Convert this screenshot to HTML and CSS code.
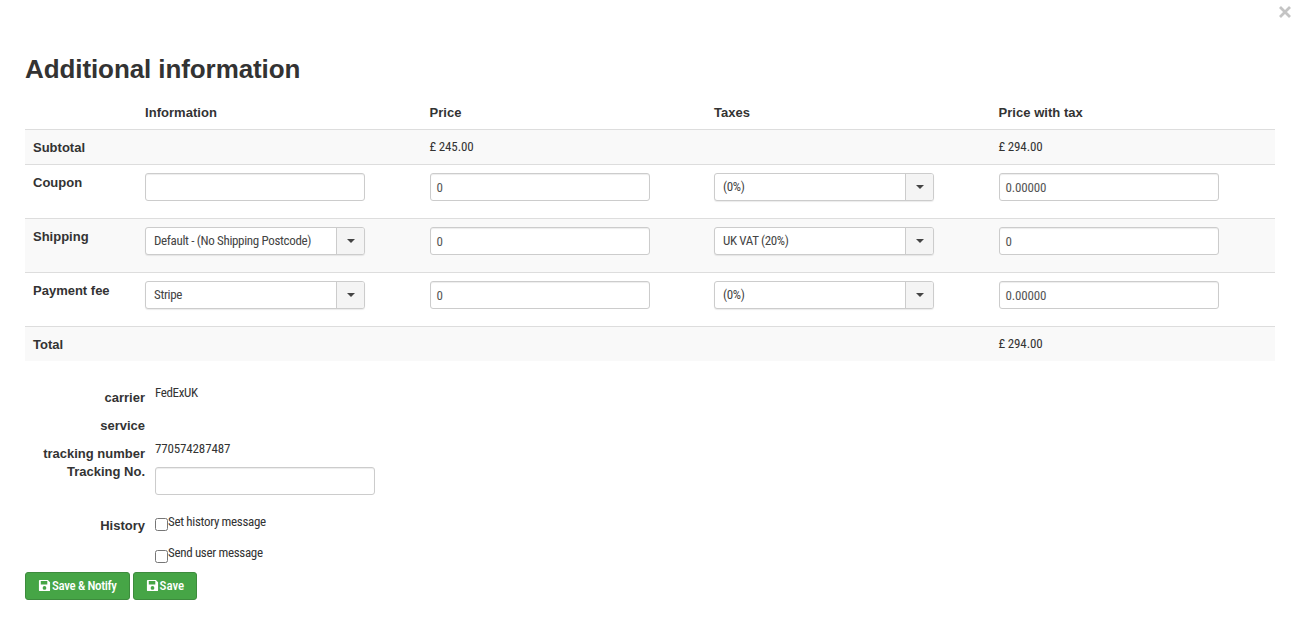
FILE: index.html
```html
<!DOCTYPE html>
<html lang="en">
<head>
<meta charset="utf-8">
<title>Additional information</title>
<link rel="stylesheet" href="styles.css">
</head>
<body>
<button class="close" type="button" aria-label="Close"><svg viewBox="0 0 12 12" width="12" height="12"><path d="M1 1l10 10M11 1L1 11" stroke="#c4c4c4" stroke-width="2.8" fill="none"/></svg></button>
<main class="page">
  <h1 class="title">Additional information</h1>
  <table class="info">
    <colgroup><col class="c-label"><col class="c-col"><col class="c-col"><col class="c-col"><col class="c-col"></colgroup>
    <thead>
      <tr><th></th><th>Information</th><th>Price</th><th>Taxes</th><th>Price with tax</th></tr>
    </thead>
    <tbody>
      <tr class="odd first"><th>Subtotal</th><td></td><td>£ 245.00</td><td></td><td>£ 294.00</td></tr>
      <tr class="tall">
        <th>Coupon</th>
        <td><div class="field"></div></td>
        <td><div class="field">0</div></td>
        <td><div class="select"><span class="sel-text">(0%)</span><span class="sel-btn"><i class="caret"></i></span></div></td>
        <td><div class="field">0.00000</div></td>
      </tr>
      <tr class="odd tall">
        <th>Shipping</th>
        <td><div class="select"><span class="sel-text">Default - (No Shipping Postcode)</span><span class="sel-btn"><i class="caret"></i></span></div></td>
        <td><div class="field">0</div></td>
        <td><div class="select"><span class="sel-text">UK VAT (20%)</span><span class="sel-btn"><i class="caret"></i></span></div></td>
        <td><div class="field">0</div></td>
      </tr>
      <tr class="tall">
        <th>Payment fee</th>
        <td><div class="select"><span class="sel-text">Stripe</span><span class="sel-btn"><i class="caret"></i></span></div></td>
        <td><div class="field">0</div></td>
        <td><div class="select"><span class="sel-text">(0%)</span><span class="sel-btn"><i class="caret"></i></span></div></td>
        <td><div class="field">0.00000</div></td>
      </tr>
      <tr class="odd last"><th>Total</th><td></td><td></td><td></td><td>£ 294.00</td></tr>
    </tbody>
  </table>
  <section class="details">
    <div class="row r-carrier"><span class="lbl">carrier</span><span class="val">FedExUK</span></div>
    <div class="row r-service"><span class="lbl">service</span><span class="val"></span></div>
    <div class="row r-number"><span class="lbl">tracking number</span><span class="val">770574287487</span></div>
    <div class="row r-track"><span class="lbl">Tracking No.</span><div class="field"></div></div>
    <div class="row r-history"><span class="lbl">History</span><label class="check"><span class="box"></span>Set history message</label></div>
    <div class="row r-send"><span class="lbl"></span><label class="check"><span class="box"></span>Send user message</label></div>
  </section>
  <div class="actions">
    <button class="btn btn-notify" type="button"><svg class="ico" viewBox="0 0 14 14"><path fill-rule="evenodd" d="M2 1h8.600L13 3.400V12a1 1 0 0 1-1 1H2a1 1 0 0 1-1-1V2a1 1 0 0 1 1-1zm1 1.200v3.600h7V2.200zM7 7.600a2 2 0 1 0 0 4 2 2 0 0 0 0-4z" fill="#fff"/></svg>Save &amp; Notify</button>
    <button class="btn btn-save" type="button"><svg class="ico" viewBox="0 0 14 14"><path fill-rule="evenodd" d="M2 1h8.600L13 3.400V12a1 1 0 0 1-1 1H2a1 1 0 0 1-1-1V2a1 1 0 0 1 1-1zm1 1.200v3.600h7V2.200zM7 7.600a2 2 0 1 0 0 4 2 2 0 0 0 0-4z" fill="#fff"/></svg>Save</button>
  </div>
</main>
</body>
</html>
```
FILE: styles.css
```css
* { box-sizing: border-box; }
html, body { margin: 0; height: 100%; }
body {
  background: #fff;
  color: #333;
  font-family: "Liberation Sans", Arial, sans-serif;
  font-size: 13px;
  overflow: hidden;
  position: relative;
}
.close {
  position: absolute;
  top: 6px;
  right: 5px;
  width: 12px;
  height: 12px;
  padding: 0;
  border: 0;
  background: none;
  line-height: 0;
}
.page { padding: 0 21px 0 25px; }
.title {
  margin: 0;
  padding-top: 53px;
  height: 95px;
  font-size: 26px;
  line-height: 32px;
  font-weight: 700;
  letter-spacing: -0.09px;
  color: #333;
}
.info {
  width: 1250px;
  table-layout: fixed;
  border-collapse: collapse;
}
.c-label { width: 112px; }
.c-col { width: 284.5px; }
.info thead th {
  height: 33px;
  padding: 8px 8px 7px;
  font-size: 13px;
  line-height: 19px;
  letter-spacing: 0.04px;
  text-align: left;
  vertical-align: bottom;
  border-bottom: 1px solid #ddd;
  color: #333;
}
.info tbody th {
  padding: 8px;
  text-align: left;
  vertical-align: top;
  font-size: 13px;
  line-height: 19px;
  color: #333;
}
.info td {
  padding: 8px;
  vertical-align: top;
  font-family: Roboto, "Liberation Sans", sans-serif;
  font-stretch: 75%;
  font-size: 13px;
  line-height: 18px;
  letter-spacing: -0.15px;
  color: #333;
}
.info tbody tr { border-top: 1px solid #ddd; }
.info tbody tr:first-child { border-top: 0; }
.odd { background: #f9f9f9; }
.first { height: 35px; }
.last { height: 34px; }
.tall { height: 54px; }
.info .first td { padding-bottom: 7px; }
.info .first th { padding-bottom: 7px; }
.info .last td { padding-bottom: 6px; }
.info .last th { padding-bottom: 6px; }
.field {
  width: 220px;
  height: 28px;
  padding: 5px 6px 3px;
  background: #fff;
  border: 1px solid #ccc;
  border-radius: 3px;
  box-shadow: inset 0 1px 1px rgba(0,0,0,.075);
  font-family: Roboto, "Liberation Sans", sans-serif;
  font-stretch: 75%;
  font-size: 13px;
  line-height: 18px;
  letter-spacing: -0.15px;
  color: #555;
}
.select {
  display: flex;
  width: 220px;
  height: 28px;
  background: #fff;
  border: 1px solid #ccc;
  border-radius: 3px;
  box-shadow: 0 1px 1px rgba(0,0,0,.08);
}
.sel-text {
  flex: 1;
  min-width: 0;
  padding: 4px 8px;
  line-height: 18px;
  letter-spacing: -0.34px;
  color: #444;
  white-space: nowrap;
}
.sel-btn {
  flex: none;
  width: 28px;
  display: flex;
  align-items: center;
  justify-content: center;
  background: #f4f4f4;
  border-left: 1px solid #ccc;
  border-radius: 0 2px 2px 0;
}
.caret {
  width: 0;
  height: 0;
  border-left: 4px solid transparent;
  border-right: 4px solid transparent;
  border-top: 4px solid #444;
}
.details { margin-top: 20px; }
.row { display: flex; column-gap: 10px; }
.lbl {
  width: 120px;
  flex: none;
  text-align: right;
  font-weight: 700;
  font-size: 13px;
  line-height: 19px;
  color: #333;
}
.val {
  margin-top: 3px;
  font-family: Roboto, "Liberation Sans", sans-serif;
  font-stretch: 75%;
  font-size: 13px;
  line-height: 18px;
  letter-spacing: -0.37px;
  color: #333;
}
.r-carrier { height: 28px; align-items: flex-start; }
.r-carrier .lbl { padding-top: 7px; }
.r-service { height: 28px; }
.r-service .lbl { padding-top: 7px; }
.r-number { height: 19px; }
.r-number .lbl { padding-top: 7px; height: 26px; }
.r-number .val { letter-spacing: -0.15px; }
.r-track { height: 55px; }
.r-track .lbl { padding-top: 6px; height: 25px; }
.r-track .field { margin-top: 11px; }
.r-history { height: 32px; }
.r-history .lbl { padding-top: 5px; height: 24px; }
.r-send { height: 29px; }
.check {
  display: flex;
  align-items: flex-start;
  font-family: Roboto, "Liberation Sans", sans-serif;
  font-stretch: 75%;
  font-size: 13px;
  line-height: 18px;
  letter-spacing: -0.33px;
  color: #333;
}
.r-history .check { margin-top: 2px; }
.r-send .check { margin-top: 1px; }
.box {
  width: 13px;
  height: 13px;
  margin-top: 5px;
  background: #fff;
  border: 1px solid #767676;
  border-radius: 2.5px;
}
.r-send .box { margin-top: 6px; }
.actions { display: flex; column-gap: 3px; }
.btn {
  height: 28px;
  display: inline-flex;
  align-items: center;
  padding: 0 12px;
  background: #46a546;
  border: 1px solid #3d8b3d;
  border-radius: 3px;
  color: #fff;
  font-family: Roboto, "Liberation Sans", sans-serif;
  font-stretch: 75%;
  font-size: 13px;
  font-weight: 500;
  letter-spacing: -0.37px;
}
.btn-save { letter-spacing: -0.1px; }
.ico { width: 13px; height: 13px; margin-right: 1px; }
```
